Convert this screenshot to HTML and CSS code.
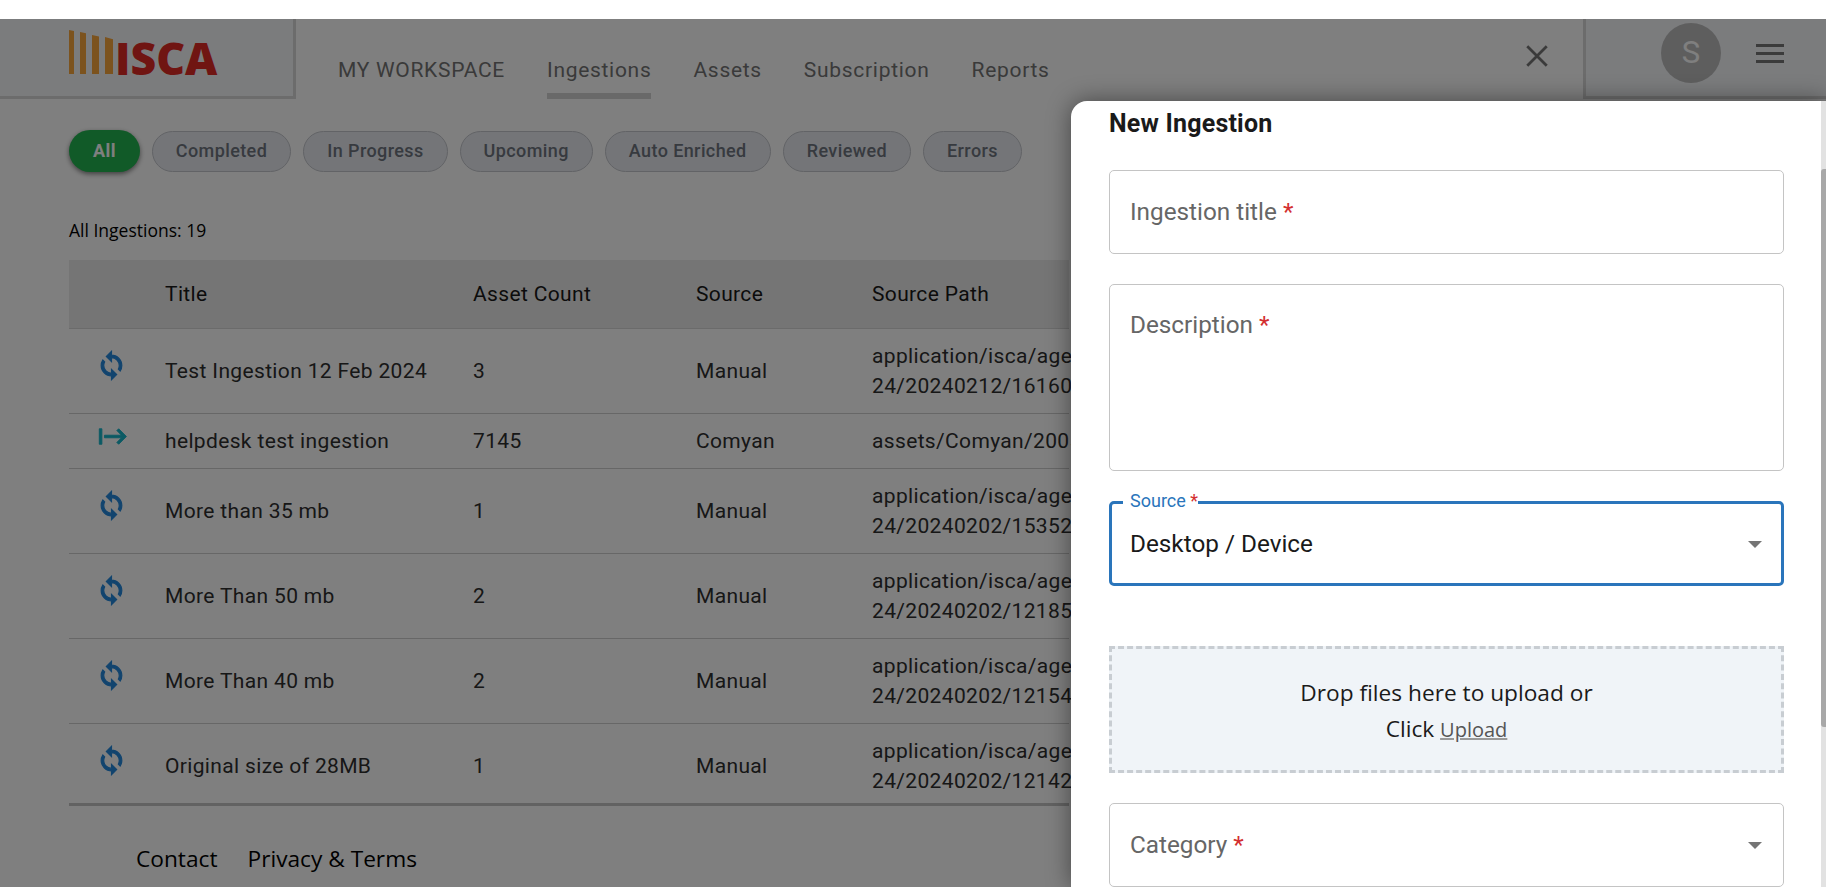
FILE: index.html
```html
<!DOCTYPE html>
<html lang="en">
<head>
<meta charset="utf-8">
<title>ISCA - Ingestions</title>
<link rel="stylesheet" href="styles.css">
</head>
<body>
<div class="page">
  <div class="strip"></div>
  <header class="header">
    <div class="brand">
      <div class="logo">
        <span class="bars">
          <i class="bar bar1"></i><i class="bar bar2"></i><i class="bar bar3"></i><i class="bar bar4"></i>
        </span>
        <span class="logo-text">ISCA</span>
      </div>
    </div>
    <nav class="tabs">
      <a class="tab">MY WORKSPACE</a>
      <a class="tab active">Ingestions</a>
      <a class="tab">Assets</a>
      <a class="tab">Subscription</a>
      <a class="tab">Reports</a>
    </nav>
    <div class="close">
      <svg viewBox="0 0 24 24" class="close-icon"><path d="M3 3 21 21M21 3 3 21"/></svg>
    </div>
    <div class="account">
      <div class="avatar">S</div>
      <div class="burger"><i></i><i></i><i></i></div>
    </div>
  </header>

  <main class="content">
    <div class="chips">
      <span class="chip on">All</span>
      <span class="chip">Completed</span>
      <span class="chip">In Progress</span>
      <span class="chip">Upcoming</span>
      <span class="chip">Auto Enriched</span>
      <span class="chip">Reviewed</span>
      <span class="chip">Errors</span>
    </div>
    <p class="count">All Ingestions: 19</p>
    <table class="grid">
      <colgroup>
        <col class="c-icon"><col class="c-title"><col class="c-count"><col class="c-source"><col class="c-path">
      </colgroup>
      <thead>
        <tr><th></th><th>Title</th><th>Asset Count</th><th>Source</th><th>Source Path</th></tr>
      </thead>
      <tbody>
        <tr class="tall">
          <td class="ic"><svg class="sync" viewBox="0 0 24 24"><path d="M12 4V1L8 5l4 4V6c3.31 0 6 2.69 6 6 0 1.01-.25 1.97-.7 2.8l1.46 1.46C19.54 15.03 20 13.57 20 12c0-4.42-3.58-8-8-8zm0 14c-3.31 0-6-2.69-6-6 0-1.01.25-1.97.7-2.8L5.24 7.74C4.46 8.97 4 10.43 4 12c0 4.42 3.58 8 8 8v3l4-4-4-4v3z"/></svg></td>
          <td>Test Ingestion 12 Feb 2024</td><td>3</td><td>Manual</td>
          <td>application/isca/age<br>24/20240212/16160</td>
        </tr>
        <tr class="short">
          <td class="ic"><svg class="tabicon" viewBox="0 0 24 24"><path d="M1 6v12h2V6H1zM14.59 7.41 18.17 11H5v2h13.17l-3.59 3.59L16 18l6-6-6-6-1.41 1.41z"/></svg></td>
          <td>helpdesk test ingestion</td><td>7145</td><td>Comyan</td>
          <td>assets/Comyan/2005</td>
        </tr>
        <tr class="tall">
          <td class="ic"><svg class="sync" viewBox="0 0 24 24"><path d="M12 4V1L8 5l4 4V6c3.31 0 6 2.69 6 6 0 1.01-.25 1.97-.7 2.8l1.46 1.46C19.54 15.03 20 13.57 20 12c0-4.42-3.58-8-8-8zm0 14c-3.31 0-6-2.69-6-6 0-1.01.25-1.97.7-2.8L5.24 7.74C4.46 8.97 4 10.43 4 12c0 4.42 3.58 8 8 8v3l4-4-4-4v3z"/></svg></td>
          <td>More than 35 mb</td><td>1</td><td>Manual</td>
          <td>application/isca/age<br>24/20240202/15352</td>
        </tr>
        <tr class="tall">
          <td class="ic"><svg class="sync" viewBox="0 0 24 24"><path d="M12 4V1L8 5l4 4V6c3.31 0 6 2.69 6 6 0 1.01-.25 1.97-.7 2.8l1.46 1.46C19.54 15.03 20 13.57 20 12c0-4.42-3.58-8-8-8zm0 14c-3.31 0-6-2.69-6-6 0-1.01.25-1.97.7-2.8L5.24 7.74C4.46 8.97 4 10.43 4 12c0 4.42 3.58 8 8 8v3l4-4-4-4v3z"/></svg></td>
          <td>More Than 50 mb</td><td>2</td><td>Manual</td>
          <td>application/isca/age<br>24/20240202/12185</td>
        </tr>
        <tr class="tall">
          <td class="ic"><svg class="sync" viewBox="0 0 24 24"><path d="M12 4V1L8 5l4 4V6c3.31 0 6 2.69 6 6 0 1.01-.25 1.97-.7 2.8l1.46 1.46C19.54 15.03 20 13.57 20 12c0-4.42-3.58-8-8-8zm0 14c-3.31 0-6-2.69-6-6 0-1.01.25-1.97.7-2.8L5.24 7.74C4.46 8.97 4 10.43 4 12c0 4.42 3.58 8 8 8v3l4-4-4-4v3z"/></svg></td>
          <td>More Than 40 mb</td><td>2</td><td>Manual</td>
          <td>application/isca/age<br>24/20240202/12154</td>
        </tr>
        <tr class="tall last">
          <td class="ic"><svg class="sync" viewBox="0 0 24 24"><path d="M12 4V1L8 5l4 4V6c3.31 0 6 2.69 6 6 0 1.01-.25 1.97-.7 2.8l1.46 1.46C19.54 15.03 20 13.57 20 12c0-4.42-3.58-8-8-8zm0 14c-3.31 0-6-2.69-6-6 0-1.01.25-1.97.7-2.8L5.24 7.74C4.46 8.97 4 10.43 4 12c0 4.42 3.58 8 8 8v3l4-4-4-4v3z"/></svg></td>
          <td>Original size of 28MB</td><td>1</td><td>Manual</td>
          <td>application/isca/age<br>24/20240202/12142</td>
        </tr>
      </tbody>
    </table>
    <footer class="foot">
      <a>Contact</a>
      <a>Privacy &amp; Terms</a>
    </footer>
  </main>

  <div class="backdrop"></div>

  <aside class="drawer">
    <h2 class="d-title">New Ingestion</h2>
    <div class="field f-line"><span class="lbl">Ingestion title <b>*</b></span></div>
    <div class="field f-area"><span class="lbl">Description <b>*</b></span></div>
    <div class="field f-line focus">
      <span class="float">Source <b>*</b></span>
      <span class="val">Desktop / Device</span>
      <i class="caret"></i>
    </div>
    <div class="drop">
      <div class="drop-line">Drop files here to upload or</div>
      <div class="drop-line">Click <u class="up">Upload</u></div>
    </div>
    <div class="field f-line"><span class="lbl">Category <b>*</b></span><i class="caret"></i></div>
    <div class="track"><div class="thumb"></div></div>
  </aside>
</div>
</body>
</html>
```

FILE: styles.css
```css
* { box-sizing: border-box; }
html, body { margin: 0; height: 100%; overflow: hidden; background: #fff; }
body { font-family: Roboto, sans-serif; color: #363636; }
.page { position: relative; width: 1826px; height: 887px; overflow: hidden; }
.strip { height: 19px; background: #fff; }

.header { display: flex; height: 80px; align-items: stretch; }
.brand { width: 296px; flex: none; background: #f6f8fb; border-right: 3px solid #d8d8d8; border-bottom: 3px solid #d8d8d8; padding: 11px 0 0 69px; }
.logo { display: flex; align-items: flex-end; height: 44px; }
.bars { display: flex; align-items: flex-end; height: 44px; gap: 6px; }
.bar { display: block; background: #f8a63c; }
.bar1 { width: 5px; height: 44px; clip-path: polygon(0 0, 100% 2%, 100% 100%, 0 100%); }
.bar2 { width: 6px; height: 42px; clip-path: polygon(0 0, 100% 3%, 100% 100%, 0 100%); }
.bar3 { width: 7px; height: 39px; clip-path: polygon(0 0, 100% 4%, 100% 100%, 0 100%); }
.bar4 { width: 8px; height: 37px; clip-path: polygon(0 0, 100% 6%, 100% 100%, 0 100%); }
.logo-text { font-family: "Open Sans", sans-serif; font-weight: 800; font-size: 44.5px; line-height: 32px; height: 32px; color: #e02a24; margin-left: 2px; }

.tabs { display: flex; gap: 42px; padding-left: 42px; flex: 1; }
.tab { display: block; height: 80px; padding-top: 36px; font-size: 21px; line-height: 30px; letter-spacing: .7px; color: #747474; font-weight: 400; border-bottom: 6px solid transparent; }
.tab.active { border-bottom-color: #d2d2d2; }

.close { width: 90px; flex: none; display: flex; align-items: center; justify-content: flex-start; padding: 0 0 7px 31px; }
.close-icon { width: 26px; height: 26px; fill: none; stroke: #777; stroke-width: 2.6; }
.account { width: 243px; flex: none; background: #f6f8fb; border-left: 3px solid #d8d8d8; border-bottom: 3px solid #d8d8d8; display: flex; align-items: flex-start; padding: 4px 0 0 75px; }
.avatar { width: 60px; height: 60px; border-radius: 50%; background: #bdbdbd; color: #fff; font-size: 31px; line-height: 60px; text-align: center; }
.burger { margin: 21px 0 0 35px; display: flex; flex-direction: column; gap: 5px; }
.burger i { display: block; width: 28px; height: 3px; background: #777; }

.content { padding: 31px 0 0 69px; }
.chips { display: flex; gap: 12px; align-items: center; height: 42px; }
.chip { height: 41px; line-height: 38px; padding: 0 23px; border: 1px solid #c4c6cc; border-radius: 21px; background: #e8ebf1; color: #6f757f; font-size: 18px; font-weight: 500; letter-spacing: .4px; }
.chip.on { height: 42px; line-height: 41px; border: 0; padding: 0 24px; background: #22b450; color: #fff; box-shadow: 0 2px 5px rgba(0,0,0,.5); font-weight: 700; }
.count { margin: 0; padding-top: 46px; font-family: "Open Sans", sans-serif; font-size: 17.5px; line-height: 24px; color: #000; }

.grid { border-collapse: collapse; table-layout: fixed; width: 1000px; margin-top: 18px; font-size: 21px; letter-spacing: .35px; color: #2e2e2e; }
.c-icon { width: 96px; }
.c-title { width: 308px; }
.c-count { width: 223px; }
.c-source { width: 176px; }
.grid th { height: 68px; background: #ebebeb; border-bottom: 1px solid #d6d6d6; text-align: left; font-weight: 400; padding: 0; color: #181818; }
.grid td { padding: 0; line-height: 30px; border-bottom: 1px solid #cfcfcf; white-space: nowrap; }
.tall td { height: 85px; }
.short td { height: 55px; }
.last td { height: 81px; padding-top: 5px; border-bottom: 3px solid #c4c4c4; }
.last .ic { padding-top: 0; }
.ic { vertical-align: top; }
.sync { display: block; width: 31px; height: 31px; fill: #2488dc; stroke: #2488dc; stroke-width: .9; margin: 21px 0 0 27px; }
.tabicon { display: block; width: 31px; height: 31px; fill: #16b4c8; stroke: #16b4c8; stroke-width: .7; margin: 7px 0 0 29px; }

.foot { display: flex; gap: 30px; padding: 37px 0 0 67px; font-family: "Open Sans", sans-serif; font-size: 22.7px; line-height: 32px; color: #000; }

.backdrop { position: absolute; left: 0; right: 0; top: 19px; bottom: 0; background: rgba(0,0,0,.5); }

.drawer { position: absolute; left: 1071px; right: 0; top: 101px; bottom: 0; background: #fff; border-top-left-radius: 16px; box-shadow: 0 0 24px rgba(0,0,0,.45); padding: 8px 42px 0 38px; overflow: hidden; display: flex; flex-direction: column; }
.d-title { margin: 0 0 31px; font-size: 25px; line-height: 30px; letter-spacing: .2px; font-weight: 700; color: #1a1a1a; }
.field { position: relative; border: 1px solid #c4c4c4; border-radius: 5px; margin-bottom: 30px; padding: 0 20px; flex: none; font-size: 24.3px; }
.f-line { height: 84px; display: flex; align-items: center; }
.f-area { height: 187px; padding-top: 25px; }
.lbl { color: #666; line-height: 30px; display: block; }
.lbl b, .float b { color: #d32f2f; font-weight: 400; }
.val { color: #1a1a1a; }
.focus { height: 85px; border: 3px solid #2a75bb; padding: 0 18px; margin-bottom: 60px; }
.float { position: absolute; left: 11px; top: -14px; background: #fff; padding: 0 0 0 7px; font-size: 18px; line-height: 22px; color: #2a75bb; }
.caret { position: absolute; right: 21px; top: 50%; margin-top: -3px; width: 0; height: 0; border-left: 7px solid transparent; border-right: 7px solid transparent; border-top: 7px solid #757575; }
.focus .caret { right: 19px; }
.drop { height: 127px; margin-bottom: 30px; flex: none; background: #f0f4f8; border: 3px dashed #c8cdd2; text-align: center; font-family: "Open Sans", sans-serif; font-size: 22.7px; line-height: 36px; color: #1a1a1a; padding-top: 26px; }
.up { font-size: 20px; color: #555; text-decoration-color: #999; }
.track { position: absolute; right: 0; top: 0; bottom: 0; width: 5px; background: #e2e2e2; }
.thumb { margin-top: 68px; height: 558px; background: #a8a8a8; border-radius: 3px 0 0 3px; }
```
